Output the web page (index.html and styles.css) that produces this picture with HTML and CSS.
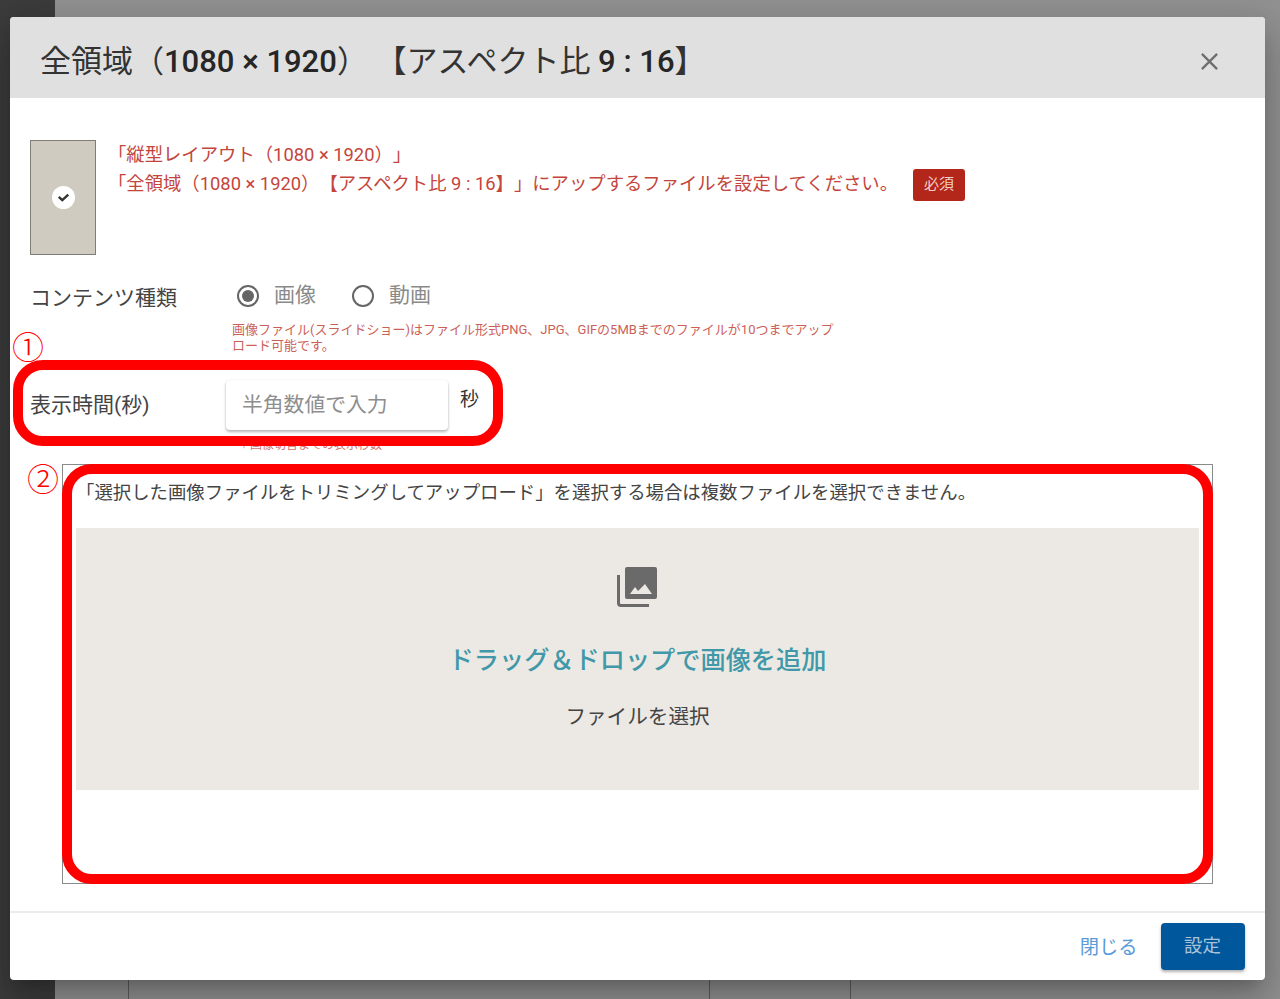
FILE: index.html
```html
<!DOCTYPE html>
<html lang="ja">
<head>
<meta charset="utf-8">
<title>全領域</title>
<link rel="stylesheet" href="styles.css">
</head>
<body>
<div class="backdrop">
  <aside class="side"></aside>
  <main class="under">
    <div class="under-lines"><i></i><i></i><i></i></div>
  </main>
</div>
<section class="modal">
  <header class="modal-head">
    <h1 class="modal-title">全領域（<b>1080 × 1920</b>） 【アスペクト比 <b>9 : 16</b>】</h1>
    <svg class="close" viewBox="0 0 20 20"><path d="M2 2 18 18M18 2 2 18"/></svg>
  </header>
  <div class="modal-body">
    <div class="layout-row">
      <div class="thumb"><span class="check"><svg viewBox="0 0 12 12"><path d="M1.6 5.4 4.9 8.4 10.4 3.4"/></svg></span></div>
      <div class="layout-text">
        <p class="layout-line">「縦型レイアウト（1080 × 1920）」</p>
        <p class="layout-line">「全領域（1080 × 1920）【アスペクト比 9 : 16】」にアップするファイルを設定してください。<span class="required">必須</span></p>
      </div>
    </div>
    <div class="type-row">
      <div class="label">コンテンツ種類</div>
      <div class="radios">
        <span class="radio on"></span><span class="radio-text">画像</span>
        <span class="radio"></span><span class="radio-text">動画</span>
      </div>
    </div>
    <p class="note">画像ファイル(スライドショー)はファイル形式PNG、JPG、GIFの5MBまでのファイルが10つまでアップロード可能です。</p>
    <div class="time-row">
      <div class="label time-label">表示時間(秒)</div>
      <div class="time-input">半角数値で入力</div>
      <div class="unit">秒</div>
    </div>
    <p class="hint">＊画像切替までの表示秒数</p>
    <div class="upload-frame">
      <p class="upload-note">「選択した画像ファイルをトリミングしてアップロード」を選択する場合は複数ファイルを選択できません。</p>
      <div class="dropzone">
        <svg class="drop-icon" viewBox="0 0 40 40"><path fill-rule="evenodd" d="M10 0h28a2 2 0 0 1 2 2v28a2 2 0 0 1-2 2H10a2 2 0 0 1-2-2V2a2 2 0 0 1 2-2zm3 27h22l-7-10-7 7-3-4z"/><path d="M0 8h3v28a1 1 0 0 0 1 1h28v3H4a4 4 0 0 1-4-4z"/></svg>
        <p class="drop-title">ドラッグ＆ドロップで画像を追加</p>
        <p class="drop-file">ファイルを選択</p>
      </div>
    </div>
  </div>
  <footer class="modal-foot">
    <span class="btn-close">閉じる</span>
    <span class="btn-set">設定</span>
  </footer>
</section>
<div class="mark mark-one"></div>
<div class="mark mark-two"></div>
<span class="num num-one">①</span>
<span class="num num-two">②</span>
</body>
</html>
```

FILE: styles.css
```css
* { box-sizing: border-box; }
html, body { margin: 0; height: 999px; overflow: hidden; }
body {
  font-family: Roboto, "Noto Sans CJK JP", sans-serif;
  color: #333;
  background: #888;
  text-spacing-trim: space-all;
}
p, h1 { margin: 0; }
.backdrop { display: flex; height: 999px; }
.side { width: 55px; background: #3c3c3c; }
.under { flex: 1; background: #929292; position: relative; }
.under-lines { display: flex; height: 100%; }
.under-lines i { border-right: 1px solid #5f5f5f; height: 19px; margin-top: 980px; }
.under-lines i:nth-child(1) { width: 74px; }
.under-lines i:nth-child(2) { width: 581px; }
.under-lines i:nth-child(3) { width: 141px; }
.modal {
  position: absolute; left: 9.5px; top: 17px; width: 1255.5px; height: 963px;
  background: #fff; border-radius: 4px; overflow: hidden;
  box-shadow: 0 11px 15px -7px rgba(0,0,0,.2), 0 24px 38px 3px rgba(0,0,0,.14), 0 9px 46px 8px rgba(0,0,0,.12);
  display: flex; flex-direction: column;
}
.modal-head {
  height: 81px; flex: none; background: #e0e0e0;
  display: flex; align-items: center; justify-content: space-between;
  padding: 8px 46px 0 30.5px;
}
.modal-title { font-size: 31px; font-weight: 400; color: #333; line-height: 1; white-space: nowrap; }
.modal-title b { font-weight: 500; color: #262626; }
.close { width: 19px; height: 19px; fill: none; stroke: #6e6e6e; stroke-width: 2.4; }
.modal-body { flex: 1; padding: 42px 20px 0 20.5px; position: relative; }
.layout-row { display: flex; height: 115px; }
.thumb {
  width: 66px; height: 115px; background: #d0cbc0; border: 1px solid #7f7d76;
  display: flex; align-items: center; justify-content: center;
}
.check { width: 23px; height: 23px; border-radius: 50%; background: #fff; display: flex; align-items: center; justify-content: center; }
.check svg { width: 13px; height: 13px; fill: none; stroke: #333; stroke-width: 2.2; }
.layout-text { padding: 1px 0 0 12px; }
.layout-line { font-size: 18.35px; line-height: 28px; color: #c4453c; white-space: nowrap; }
.required {
  display: inline-block; width: 52px; height: 32px; line-height: 30px; margin-left: 15px;
  background: #b3261a; color: #f0cdc8; font-size: 15px; text-align: center;
  border-radius: 3px; vertical-align: middle;
}
.type-row { display: flex; align-items: center; height: 34px; margin-top: 25px; }
.label { font-size: 21px; color: #444; white-space: nowrap; }
.type-row .label { width: 207px; padding-bottom: 2px; }
.radios { display: flex; align-items: center; }
.radio { width: 22px; height: 22px; border: 2px solid #666; border-radius: 50%; position: relative; margin: 0 15px 2px 0; }
.radio.on::after { content: ""; position: absolute; inset: 3px; border-radius: 50%; background: #666; }
.radio-text { font-size: 21px; color: #8a8a8a; margin: 0 36px 8px 0; }
.note { font-size: 13px; line-height: 16px; color: #cc5f58; width: 606px; margin: 8px 0 0 202px; }
.time-row { display: flex; align-items: flex-start; height: 60px; margin-top: 26px; }
.time-label { width: 196px; padding-top: 10px; line-height: 30px; }
.time-input {
  width: 222px; height: 50px; padding-left: 16px; line-height: 50px;
  font-size: 20.8px; color: #8e8e8e; background: #fff; border-radius: 4px;
  box-shadow: 0 2px 3px rgba(0,0,0,.28), 0 0 2px rgba(0,0,0,.08);
}
.unit { font-size: 19px; padding: 4px 0 0 12px; color: #333; }
.hint { height: 14px; font-size: 12px; line-height: 10px; color: #d2756f; margin-left: 208px; }
.upload-frame {
  width: 1151px; height: 420px; margin: 10px 0 0 32px;
  border: 1px solid #8a8a8a; padding: 15px 13px 0;
}
.upload-note { font-size: 18.4px; line-height: 26px; color: #444; white-space: nowrap; }
.dropzone {
  height: 262px; margin-top: 22px; background: #ece9e4;
  display: flex; flex-direction: column; align-items: center;
}
.drop-icon { width: 40px; height: 40px; fill: #6a6a6a; margin: 39px 1px 0 0; }
.drop-title { font-size: 25.2px; line-height: 36px; font-weight: 500; color: #4198a8; margin-top: 36px; }
.drop-file { font-size: 20.6px; line-height: 30px; color: #444; margin-top: 23px; }
.modal-foot {
  height: 69px; flex: none; border-top: 2px solid #ececec;
  display: flex; align-items: center; justify-content: flex-end; gap: 23px; padding: 0 20.5px 0 0;
}
.btn-close { font-size: 19.3px; color: #5a9bd8; margin-bottom: 2px; }
.btn-set {
  width: 84px; height: 47px; border-radius: 4px; background: #01579b; color: #a9c3da;
  font-size: 18.5px; line-height: 47px; text-align: center;
  box-shadow: 0 2px 3px rgba(0,0,0,.3);
}
.mark { position: absolute; border: 10px solid #f00; }
.mark-one { left: 13px; top: 360px; width: 490px; height: 86px; border-radius: 30px; }
.mark-two { left: 62px; top: 464px; width: 1151px; height: 420px; border-radius: 30px; }
.num { position: absolute; font-size: 32px; line-height: 36px; color: #f00; font-family: "Noto Sans CJK JP", sans-serif; font-weight: 300; }
.num-one { left: 12px; top: 327px; }
.num-two { left: 27px; top: 459px; }
```
